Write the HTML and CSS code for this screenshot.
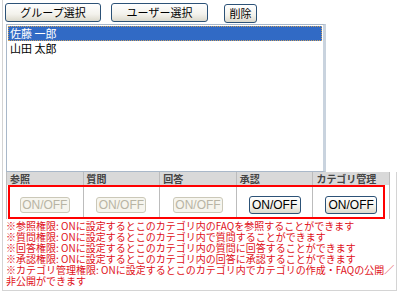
FILE: index.html
```html
<!DOCTYPE html>
<html lang="ja">
  <head>
    <meta charset="UTF-8" />
    <title>カテゴリ権限設定</title>
    <link rel="stylesheet" href="styles.css">
  </head>
  <body>
    <div class="panel">
      <div class="toolbar">
        <button class="btn btn-group">グループ選択</button>
        <button class="btn btn-user">ユーザー選択</button>
        <button class="btn btn-del">削除</button>
      </div>
      <div class="list">
        <div class="list-item selected">佐藤 一郎</div>
        <div class="list-item">山田 太郎</div>
      </div>
      <div class="perm-box">
        <table class="perm">
          <tr>
            <th>参照</th>
            <th>質問</th>
            <th>回答</th>
            <th>承認</th>
            <th>カテゴリ管理</th>
          </tr>
          <tr>
            <td><button class="toggle" disabled>ON/OFF</button></td>
            <td><button class="toggle" disabled>ON/OFF</button></td>
            <td><button class="toggle" disabled>ON/OFF</button></td>
            <td><button class="toggle">ON/OFF</button></td>
            <td><button class="toggle">ON/OFF</button></td>
          </tr>
        </table>
        <div class="highlight"></div>
        <div class="notes">
          <div>※参照権限: ONに設定するとこのカテゴリ内のFAQを参照することができます</div>
          <div>※質問権限: ONに設定するとこのカテゴリ内で質問することができます</div>
          <div>※回答権限: ONに設定するとこのカテゴリ内の質問に回答することができます</div>
          <div>※承認権限: ONに設定するとこのカテゴリ内の回答に承認することができます</div>
          <div>※カテゴリ管理権限: ONに設定するとこのカテゴリ内でカテゴリの作成・FAQの公開／</div>
          <div>非公開ができます</div>
        </div>
      </div>
    </div>
  </body>
</html>
```
FILE: styles.css
```css
body {
  margin: 0;
  padding: 0;
  background: #fff;
  font-family: "Noto Sans CJK JP", "Liberation Sans", sans-serif;
}
.panel {
  width: 392px;
  margin-left: 2px;
  border-left: 1px solid #d4d4d4;
  padding-left: 2px;
}
.toolbar {
  display: flex;
  height: 21px;
  padding-top: 3px;
}
.btn {
  height: 19px;
  padding: 0;
  font-family: "Noto Sans CJK JP", sans-serif;
  font-size: 11px;
  line-height: 15px;
  color: #000;
  border: 1px solid #2c5277;
  border-radius: 3px;
  background: linear-gradient(#ffffff, #f3f2ec 60%, #dcd9cc);
}
.btn-group {
  width: 96px;
}
.btn-user {
  width: 97px;
  margin-left: 10px;
}
.btn-del {
  width: 33px;
  margin-left: 16px;
  margin-top: 1px;
}
.list {
  width: 314px;
  height: 144px;
  margin-left: 1px;
  border: 1px solid #a9b8c9;
  border-right: 3px solid #c9d3de;
  padding: 1px;
  background: #fff;
}
.list-item {
  height: 15px;
  font-size: 11px;
  line-height: 15px;
  padding-left: 2px;
  color: #000;
}
.list-item.selected {
  background: #316ac5;
  color: #fff;
  outline: 1px dotted #c8a060;
  outline-offset: -1px;
}
.perm-box {
  position: relative;
  margin-left: -2px;
  border-right: 1px solid #d4d4d4;
  border-bottom: 1px solid #d4d4d4;
  padding-left: 3px;
  padding-bottom: 4px;
}
.perm {
  width: 384px;
  border-collapse: collapse;
  table-layout: fixed;
}
.perm th {
  height: 13px;
  padding: 0 0 0 3px;
  background: #d9d9d9;
  border-left: 1px solid #bcbcbc;
  border-right: 1px solid #bcbcbc;
  font-size: 10px;
  line-height: 13px;
  font-weight: bold;
  color: #444;
  text-align: left;
  overflow: hidden;
}
.perm td {
  height: 34px;
  padding: 0;
  border-left: 1px solid #bcbcbc;
  border-right: 1px solid #bcbcbc;
  text-align: center;
}
.toggle {
  width: 52px;
  height: 18px;
  padding: 0;
  font-family: "Liberation Sans", Arial, sans-serif;
  font-size: 12px;
  color: #000;
  border: 1px solid #2c5277;
  border-radius: 3px;
  background: linear-gradient(#ffffff, #f3f2ec 60%, #dcd9cc);
}
.toggle:disabled {
  width: 50px;
  height: 16px;
  color: #b8b4a4;
  border-color: #cbc8b8;
  background: #f6f5ee;
}
.highlight {
  position: absolute;
  left: 5px;
  top: 13px;
  width: 373px;
  height: 30px;
  border: 2px solid #f00;
}
.notes {
  padding-top: 1px;
  font-size: 10px;
  line-height: 11px;
  color: #e01020;
  white-space: nowrap;
}
```
